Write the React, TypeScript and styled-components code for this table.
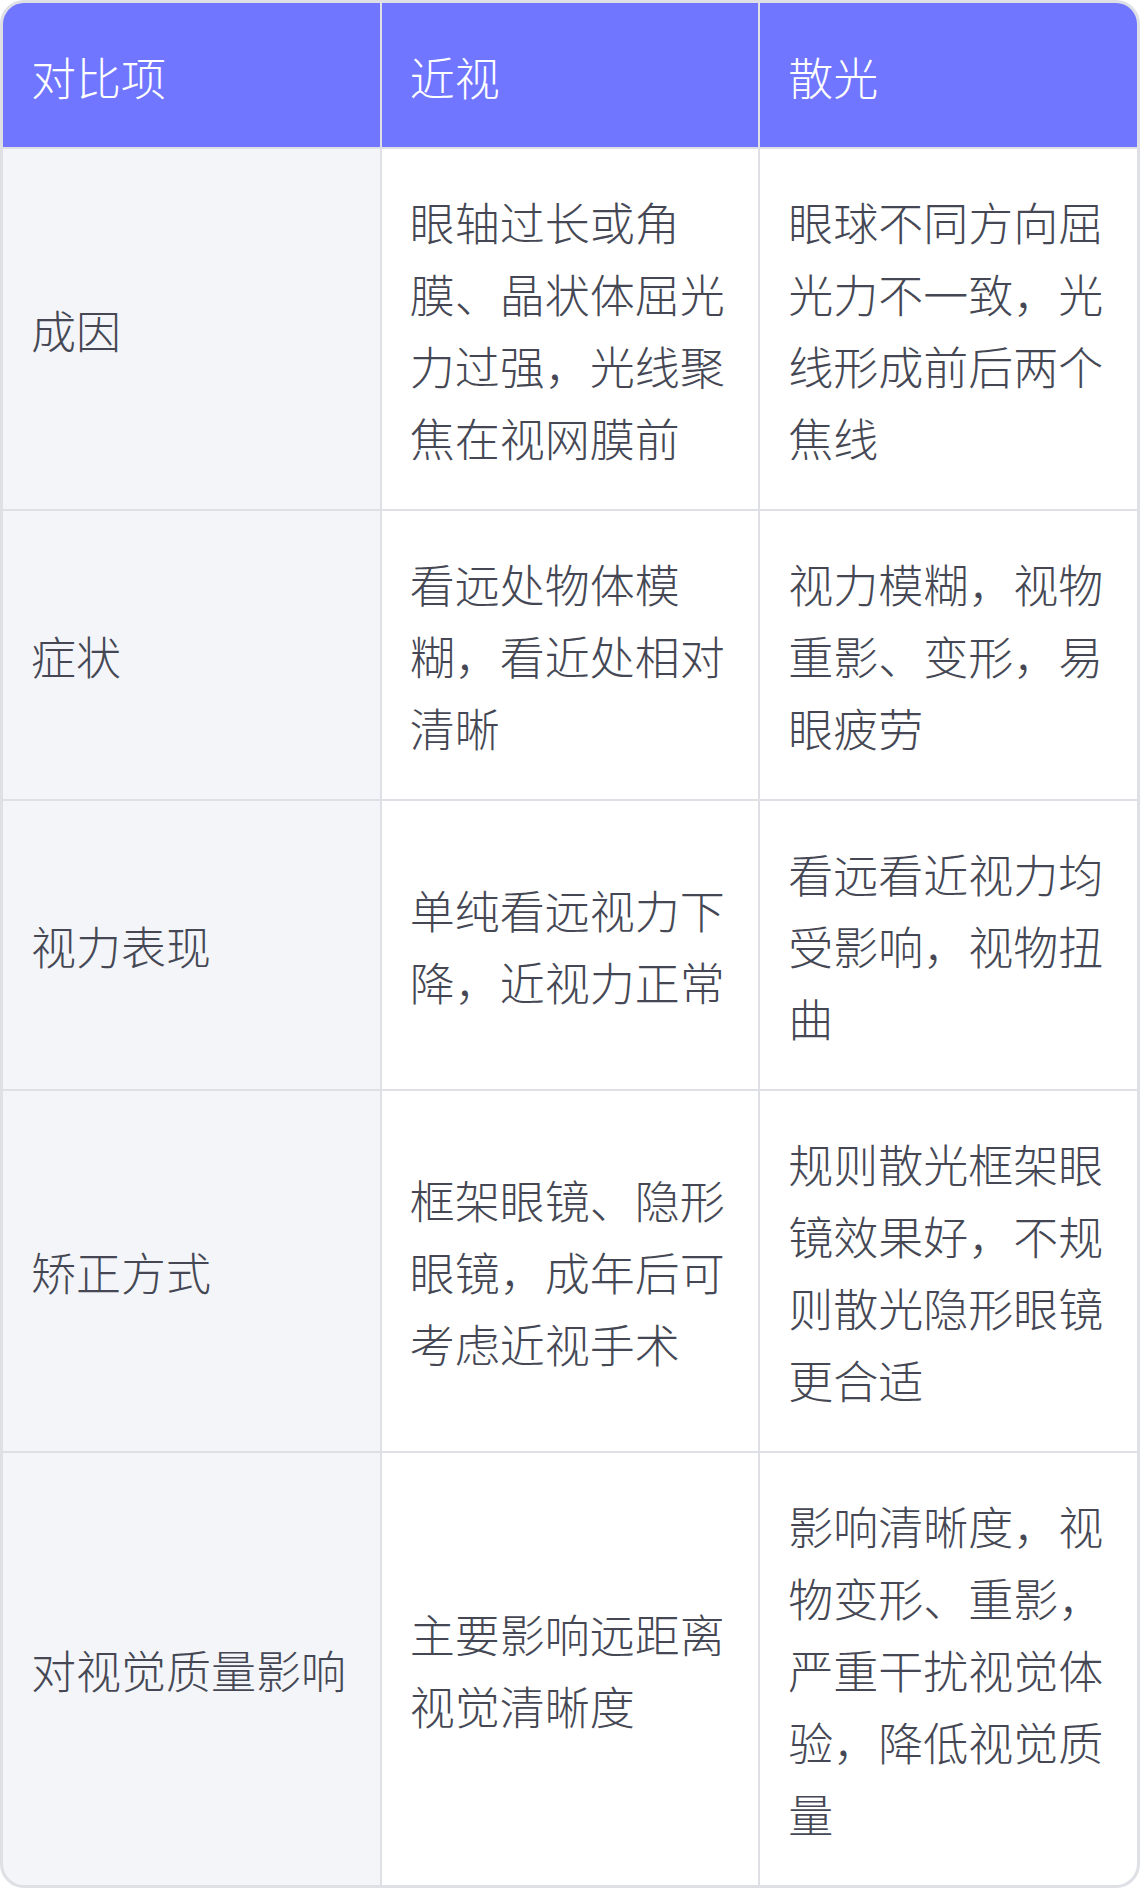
import { Fragment } from "react";
import styled, { createGlobalStyle } from "styled-components";

const GlobalStyle = createGlobalStyle`
	html, body {
		margin: 0;
		padding: 0;
		background: #ffffff;
	}

	body {
		font-family: "Noto Sans CJK SC", "Noto Sans", sans-serif;
	}
`;

interface Row {
	label: string;
	myopia: string;
	astigmatism: string;
}

const rows: Row[] = [
	{
		label: "成因",
		myopia: "眼轴过长或角膜、晶状体屈光力过强，光线聚焦在视网膜前",
		astigmatism: "眼球不同方向屈光力不一致，光线形成前后两个焦线",
	},
	{
		label: "症状",
		myopia: "看远处物体模糊，看近处相对清晰",
		astigmatism: "视力模糊，视物重影、变形，易眼疲劳",
	},
	{
		label: "视力表现",
		myopia: "单纯看远视力下降，近视力正常",
		astigmatism: "看远看近视力均受影响，视物扭曲",
	},
	{
		label: "矫正方式",
		myopia: "框架眼镜、隐形眼镜，成年后可考虑近视手术",
		astigmatism: "规则散光框架眼镜效果好，不规则散光隐形眼镜更合适",
	},
	{
		label: "对视觉质量影响",
		myopia: "主要影响远距离视觉清晰度",
		astigmatism: "影响清晰度，视物变形、重影，严重干扰视觉体验，降低视觉质量",
	},
];

const Table = styled.div`
	display: grid;
	grid-template-columns: repeat(3, 1fr);
	gap: 2px;
	width: 1140px;
	box-sizing: border-box;
	border: 3px solid #dfe0e6;
	border-radius: 24px;
	overflow: hidden;
	background-color: #dfe0e6;
`;

const HeadCell = styled.div`
	display: flex;
	align-items: center;
	padding: 38px 28px 34px;
	background-color: #7076ff;
	color: #ffffff;
	font-size: 45px;
	line-height: 72px;
	font-weight: 300;
`;

const Cell = styled.div<{ $label?: boolean }>`
	display: flex;
	align-items: center;
	padding: 37px 28px 35px;
	min-width: 0;
	background-color: ${({ $label }) => ($label ? "#f4f5f9" : "#ffffff")};
	color: #454854;
	font-size: 45px;
	line-height: 72px;
	font-weight: 300;
	word-break: break-all;
`;

export default function App() {
	return (
		<>
			<GlobalStyle />
			<Table>
				<HeadCell>对比项</HeadCell>
				<HeadCell>近视</HeadCell>
				<HeadCell>散光</HeadCell>
				{rows.map((row) => (
					<Fragment key={row.label}>
						<Cell $label>{row.label}</Cell>
						<Cell>{row.myopia}</Cell>
						<Cell>{row.astigmatism}</Cell>
					</Fragment>
				))}
			</Table>
		</>
	);
}
